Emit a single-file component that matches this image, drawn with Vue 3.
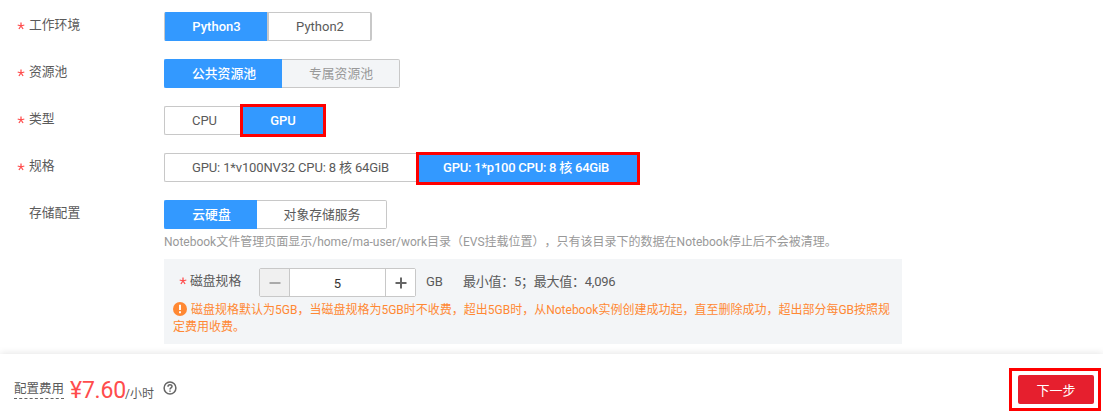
<script setup>
import { ref } from 'vue'

const rows = [
  { label: '工作环境', required: true, double: true, options: [
    { text: 'Python3', width: 103, active: true }, { text: 'Python2', width: 105 }] },
  { label: '资源池', required: true, han: true, options: [
    { text: '公共资源池', width: 118, active: true }, { text: '专属资源池', width: 118, disabled: true }] },
  { label: '类型', required: true, options: [
    { text: 'CPU', width: 79 }, { text: 'GPU', width: 80, active: true, marked: true }] },
  { label: '规格', required: true, han: true, options: [
    { text: 'GPU: 1*v100NV32 CPU: 8 核 64GiB', width: 255, tight: true },
    { text: 'GPU: 1*p100 CPU: 8 核 64GiB', width: 218, active: true, marked: true, tall: true }] },
  { label: '存储配置', required: false, han: true, options: [
    { text: '云硬盘', width: 93, active: true }, { text: '对象存储服务', width: 130 }] }
]
const size = ref(5)
</script>

<template>
  <div class="page">
    <main class="form">
      <div v-for="row in rows" :key="row.label" class="row">
        <div class="label">
          <svg v-if="row.required" class="star" viewBox="0 0 8 8"><path d="M4 .4V4M4 4L.7 3M4 4l3.3-1M4 4L1.9 7M4 4l2.1 3" /></svg>
          <span>{{ row.label }}</span>
        </div>
        <div class="group">
          <button
            v-for="opt in row.options" :key="opt.text" class="option"
            :class="{ active: opt.active, disabled: opt.disabled, marked: opt.marked, tall: opt.tall, tight: opt.tight, double: row.double, han: row.han }"
            :style="{ width: opt.width + 'px' }"
          ><span>{{ opt.text }}</span></button>
        </div>
      </div>

      <p class="hint">Notebook文件管理页面显示/home/ma-user/work目录（EVS挂载位置），只有该目录下的数据在Notebook停止后不会被清理。</p>

      <section class="disk">
        <div class="disk-row">
          <div class="disk-label">
            <svg class="star" viewBox="0 0 8 8"><path d="M4 .4V4M4 4L.7 3M4 4l3.3-1M4 4L1.9 7M4 4l2.1 3" /></svg>
            <span>磁盘规格</span>
          </div>
          <div class="stepper">
            <button class="step minus"><svg viewBox="0 0 12 12"><path d="M.5 6h11" /></svg></button>
            <span class="value">{{ size }}</span>
            <button class="step"><svg viewBox="0 0 12 12"><path d="M.5 6h11M6 .5v11" /></svg></button>
          </div>
          <span class="unit">GB</span>
          <span class="range">最小值：5；最大值：4,096</span>
        </div>
        <p class="warning"><svg class="alert" viewBox="0 0 14 14"><circle cx="7" cy="7" r="7" /><path d="M7 2.8v5.1M7 9.3v2" /></svg>磁盘规格默认为5GB，当磁盘规格为5GB时不收费，超出5GB时，从Notebook实例创建成功起，直至删除成功，超出部分每GB按照规定费用收费。</p>
      </section>
    </main>

    <footer class="footer">
      <span class="fee">配置费用</span>
      <span class="price">¥7.60</span>
      <span class="per">/小时</span>
      <svg class="help" viewBox="0 0 14 14"><circle cx="7" cy="7" r="5.9" /><path d="M5 5.7C5 3.1 9 3.2 9 5.5 9 6.9 7 6.9 7 8.4M7 9.4v1.4" /></svg>
      <div class="next-mark"><button class="next">下一步</button></div>
    </footer>
  </div>
</template>

<style>
body { margin: 0; background: #fff; }
</style>

<style scoped>
.page {
  width: 1103px; height: 419px; overflow: hidden; box-sizing: border-box;
  display: flex; flex-direction: column; background: #fff; color: #5a5a5a;
  font-family: Roboto, "Noto Sans CJK SC", sans-serif; font-size: 13px;
  text-spacing-trim: space-all;
}
button { font: inherit; margin: 0; padding: 0; box-sizing: border-box; }
p { margin: 0; }
.form { height: 354px; padding-top: 12px; box-sizing: border-box; flex: none; }
.row { height: 29px; margin-bottom: 18px; display: flex; }
.row:nth-child(5) { margin-bottom: 0; }
.label { width: 135px; padding-left: 29px; line-height: 26px; position: relative; font-size: 12.8px; white-space: nowrap; }
.star { width: 8px; height: 8px; fill: none; stroke: #ff4c4c; stroke-width: 1.25; flex: none; }
.label .star { position: absolute; left: 17px; top: 10px; }
.group { display: flex; }
.option {
  height: 29px; flex: none; display: flex; align-items: center; justify-content: center;
  background: #fff; border: 1px solid #c8c8c8; color: #5a5a5a; white-space: nowrap; font-size: 13px;
}
.option span { margin-left: 1px; }
.option.han { padding-bottom: 2px; font-size: 12.8px; }
.option:first-child { border-radius: 2px 0 0 2px; border-right-width: 0; }
.option:last-child { border-radius: 0 2px 2px 0; border-left-width: 0; }
.option.active { background: #39f; border-color: #39f; color: #fff; font-weight: 500; }
.option.disabled { background: #f3f5f7; color: #999; }
.option.tight { font-size: 13px; letter-spacing: -.15px; padding-right: 4px; }
.double:first-child { border-left: 1px solid #c8c8c8; }
.double:last-child { border-left: 2px solid #c8c8c8; border-right-width: 2px; }
.marked { outline: 3px solid #f00; position: relative; height: 27px; margin-top: 1px; }
.option.marked { border-radius: 0; }
.option.tall { margin-top: 2px; padding-bottom: 4px; padding-right: 4px; font-size: 13px; letter-spacing: -.24px; }
.hint { margin: 4px 0 0 164px; height: 18px; line-height: 18px; font-size: 12px; color: #999; white-space: nowrap; }
.disk { margin: 8px 0 0 164px; width: 738px; height: 85px; box-sizing: border-box; padding: 9px 9px 0; background: #f3f5f7; }
.disk-row { display: flex; height: 29px; align-items: stretch; line-height: 26px; }
.disk-label { width: 86px; display: flex; box-sizing: border-box; padding-left: 6px; font-size: 12.8px; }
.disk-label .star { margin: 9px 3px 0 0; }
.stepper { display: flex; width: 157px; height: 29px; border: 1px solid #c8c8c8; border-radius: 2px; box-sizing: border-box; background: #fff; }
.step { width: 29px; border: 0; background: #fff; display: flex; align-items: center; justify-content: center; }
.step svg { width: 12px; height: 12px; fill: none; stroke: #666; stroke-width: 2; }
.step.minus { background: #f0f0f0; }
.step.minus svg { stroke: #aaa; }
.value { flex: 1; border: 1px solid #c8c8c8; border-width: 0 1px; text-align: center; line-height: 30px; color: #333; }
.unit { margin-left: 10px; width: 37px; line-height: 28px; }
.range { white-space: nowrap; letter-spacing: -.25px; line-height: 27px; }
.warning { margin-top: 5px; line-height: 17px; font-size: 12px; color: #ff8833; width: 722px; }
.alert { width: 14px; height: 14px; margin-right: 4px; vertical-align: -2px; margin-top: -1px; fill: #ff8833; }
.alert path { stroke: #fff; stroke-width: 1.9; }
.footer {
  height: 65px; display: flex; box-sizing: border-box; padding-left: 14px; background: #fff;
  box-shadow: 0 -1px 7px rgba(0, 0, 0, .1); position: relative;
}
.fee { width: 50px; height: 19px; margin-top: 25px; line-height: 20px; font-size: 12.5px; border-bottom: 1px dashed #666; white-space: nowrap; }
.price { margin: 21px 0 0 6px; width: 55px; line-height: 32px; font-size: 23px; letter-spacing: -.2px; color: #ff4c4c; white-space: nowrap; }
.per { margin-top: 30px; line-height: 20px; width: 38px; font-size: 12px; white-space: nowrap; }
.help { width: 14px; height: 14px; margin-top: 27px; flex: none; fill: none; stroke: #666; stroke-width: 1.5; }
.next-mark { box-sizing: border-box; width: 92px; height: 43px; margin: 14px 2px 0 auto; border: 3px solid #f00; display: flex; align-items: center; padding-left: 6px; }
.next { width: 76px; height: 29px; border: 0; border-radius: 2px; background: #e61f2e; color: #fff; font-size: 13px; }
</style>
